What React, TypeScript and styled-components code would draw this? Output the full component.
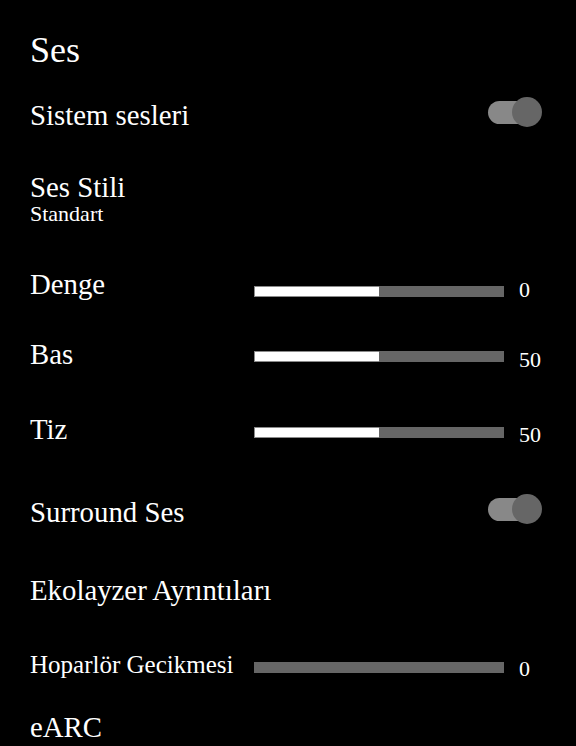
import React from "react"
import styled, { createGlobalStyle } from "styled-components"

const GlobalStyle = createGlobalStyle`
	html,
	body {
		margin: 0;
		padding: 0;
		background: #000;
	}

	body {
		font-family: "Liberation Serif", "Times New Roman", serif;
		color: #fff;
	}
`

interface SliderProps {
	label: string
	value: number
	percent: number
	small?: boolean
	gap: number
	drop: number
}

const Slider = ({ label, value, percent, small, gap, drop }: SliderProps) => (
	<SliderRow $gap={gap}>
		<Label $small={small}>{label}</Label>
		<Track $drop={drop}>
			<Fill style={{ width: `${percent}%` }} $empty={percent === 0} />
		</Track>
		<Value>{value}</Value>
	</SliderRow>
)

const Switch = () => (
	<SwitchWrap>
		<SwitchTrack />
		<SwitchKnob />
	</SwitchWrap>
)

const App = () => {
	return (
		<>
			<GlobalStyle />
			<Page>
				<Title>Ses</Title>

				<ToggleRow $gap={29}>
					<Label>Sistem sesleri</Label>
					<Switch />
				</ToggleRow>

				<Block $gap={40}>
					<Label>Ses Stili</Label>
					<SubLabel>Standart</SubLabel>
				</Block>

				<Slider label="Denge" value={0} percent={50} gap={43} drop={3} />
				<Slider label="Bas" value={50} percent={50} gap={38} drop={8} />
				<Slider label="Tiz" value={50} percent={50} gap={43} drop={7} />

				<ToggleRow $gap={51}>
					<Label>Surround Ses</Label>
					<Switch />
				</ToggleRow>

				<Block $gap={46}>
					<Label>Ekolayzer Ayrıntıları</Label>
				</Block>

				<Slider label="Hoparlör Gecikmesi" value={0} percent={0} small gap={45} drop={6} />

				<Block $gap={32}>
					<Label>eARC</Label>
				</Block>
			</Page>
		</>
	)
}

const Page = styled.div`
	width: 576px;
	min-height: 746px;
	box-sizing: border-box;
	padding: 30px 34px 0 30px;
	background: #000;
	display: flex;
	flex-direction: column;
`

const Title = styled.h1`
	margin: 0;
	font-size: 36px;
	line-height: 40px;
	font-weight: 400;
`

const Label = styled.div<{ $small?: boolean }>`
	font-size: ${(props) => (props.$small ? "25px" : "28.8px")};
	line-height: ${(props) => (props.$small ? "28px" : "32px")};
	white-space: nowrap;
`

const SubLabel = styled.div`
	font-size: 22px;
	line-height: 22px;
`

const Block = styled.div<{ $gap: number }>`
	margin-top: ${(props) => props.$gap}px;
	display: flex;
	flex-direction: column;
`

const ToggleRow = styled.div<{ $gap: number }>`
	margin-top: ${(props) => props.$gap}px;
	display: flex;
	align-items: center;
	justify-content: space-between;
	height: 32px;
`

const SliderRow = styled.div<{ $gap: number }>`
	margin-top: ${(props) => props.$gap}px;
	display: grid;
	grid-template-columns: 209px 250px auto;
	column-gap: 15px;
	align-items: end;
`

const Track = styled.div<{ $drop: number }>`
	height: 11px;
	margin-bottom: ${(props) => props.$drop}px;
	background: #666;
	display: flex;
`

const Fill = styled.div<{ $empty: boolean }>`
	box-sizing: border-box;
	height: 100%;
	background: #fff;
	border: ${(props) => (props.$empty ? "none" : "1px solid #8a8a8a")};
	border-right: none;
`

const Value = styled.div`
	font-size: 22px;
	line-height: 24px;
	margin-bottom: -2px;
`

const SwitchWrap = styled.div`
	position: relative;
	width: 54px;
	height: 30px;
	margin-bottom: 6px;
`

const SwitchTrack = styled.div`
	position: absolute;
	left: 0;
	top: 4px;
	width: 46px;
	height: 23px;
	border-radius: 12px;
	background: #888;
`

const SwitchKnob = styled.div`
	position: absolute;
	right: 0;
	top: 0;
	width: 30px;
	height: 30px;
	border-radius: 50%;
	background: #666;
`

export default App
